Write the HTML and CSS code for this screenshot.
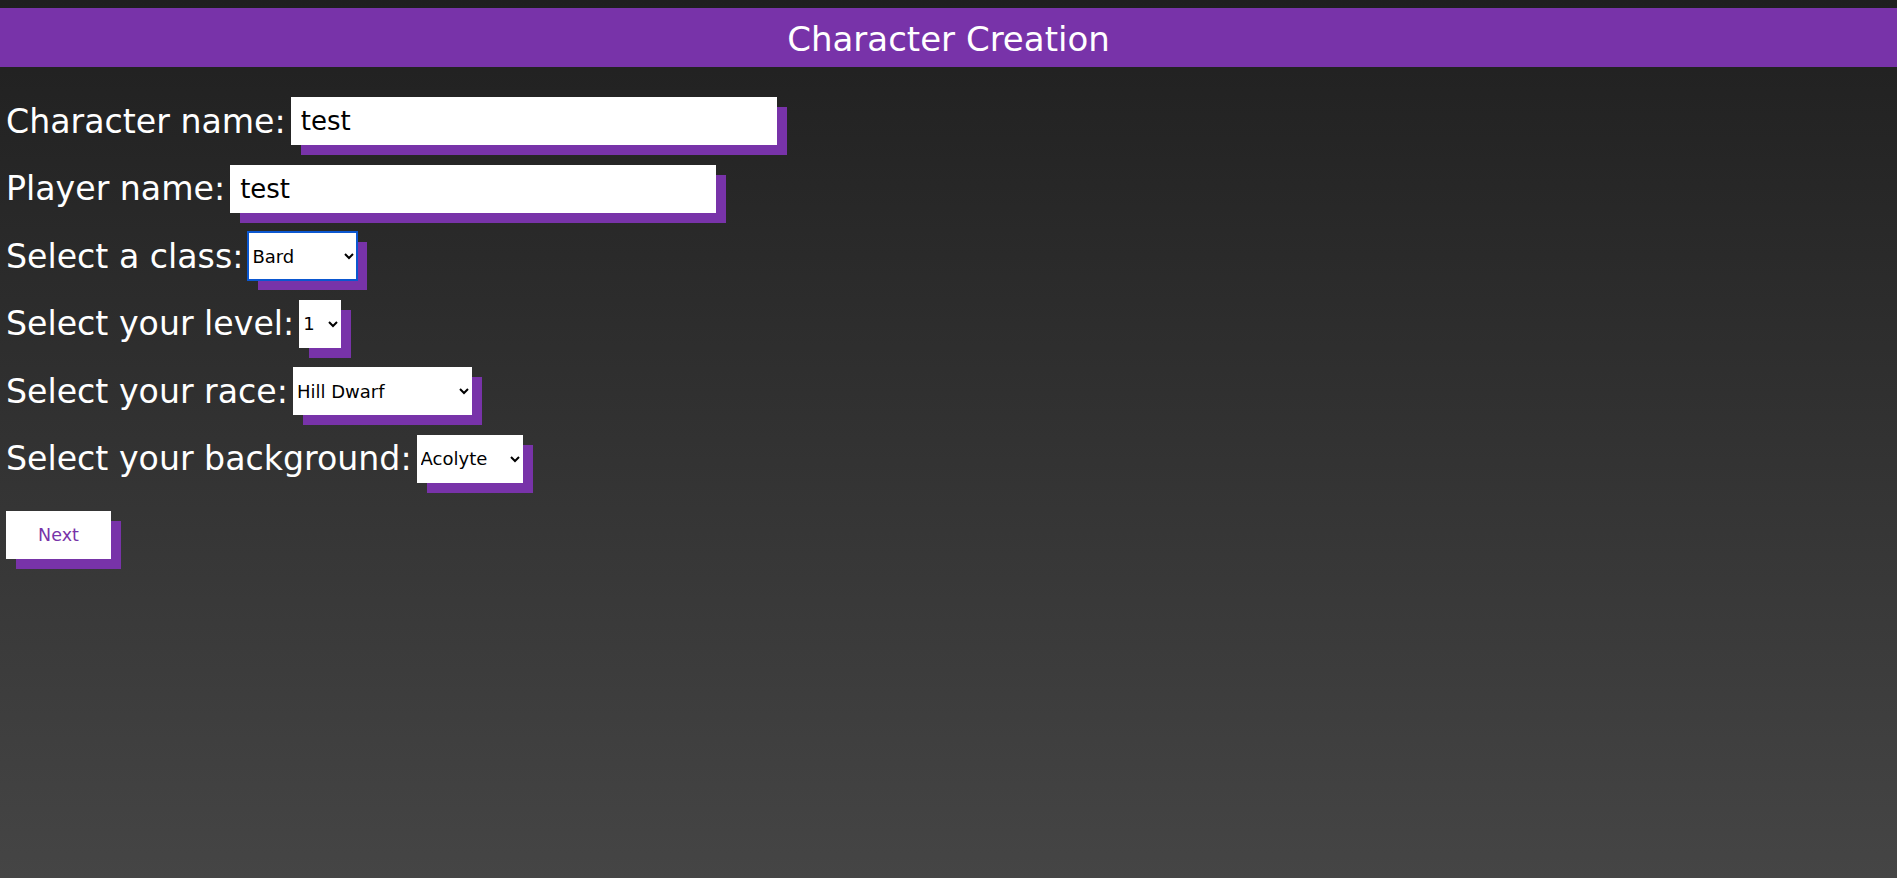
FILE: index.html
```html
<!DOCTYPE html>
<html lang="en">
<head>
<meta charset="utf-8">
<title>Character Creation</title>
<link rel="stylesheet" href="styles.css">
</head>
<body>
<header class="topbar"><h1 class="title">Character Creation</h1></header>
<main class="form">
  <div class="row">
    <label class="label" for="cname">Character name:</label>
    <input class="field text" id="cname" type="text" value="test">
  </div>
  <div class="row">
    <label class="label" for="pname">Player name:</label>
    <input class="field text" id="pname" type="text" value="test">
  </div>
  <div class="row">
    <label class="label" for="cls">Select a class:</label>
    <select class="field pick pick-class focused" id="cls">
      <option>Bard</option><option>Barbarian</option><option>Cleric</option>
    </select>
  </div>
  <div class="row">
    <label class="label" for="lvl">Select your level:</label>
    <select class="field pick pick-level" id="lvl">
      <option>1</option><option>2</option><option>3</option>
    </select>
  </div>
  <div class="row">
    <label class="label" for="race">Select your race:</label>
    <select class="field pick pick-race" id="race">
      <option>Hill Dwarf</option><option>Mountain Dwarf</option>
    </select>
  </div>
  <div class="row">
    <label class="label" for="bg">Select your background:</label>
    <select class="field pick pick-bg" id="bg">
      <option>Acolyte</option><option>Charlatan</option>
    </select>
  </div>
  <div class="actions">
    <button class="next" type="button">Next</button>
  </div>
</main>
</body>
</html>
```

FILE: styles.css
```css
html, body {
  margin: 0;
  padding: 0;
  height: 100%;
}
body {
  background: linear-gradient(to bottom, #1f1f1f 0%, #454545 100%);
  font-family: "DejaVu Sans", "Liberation Sans", sans-serif;
  color: #ffffff;
  padding-top: 8px;
  box-sizing: border-box;
}
.topbar {
  background: #7833a9;
  height: 59px;
  display: flex;
  align-items: center;
  justify-content: center;
}
.title {
  margin: 0;
  font-weight: normal;
  font-size: 34px;
  color: #ffffff;
  padding-top: 2px;
}
.form {
  padding: 30px 0 0 6px;
  display: flex;
  flex-direction: column;
  gap: 19.5px;
}
.row {
  display: flex;
  align-items: center;
  gap: 5px;
}
.label {
  font-size: 33.2px;
  color: #ffffff;
}
.field {
  box-sizing: border-box;
  height: 48px;
  border: none;
  background: #ffffff;
  color: #000000;
  box-shadow: 10px 10px 0 #7833a9;
  margin: 0;
  font-family: "DejaVu Sans", "Liberation Sans", sans-serif;
}
.text {
  width: 486px;
  padding: 0 10px;
  font-size: 26px;
}
.pick {
  font-size: 18px;
  padding: 0;
}
.pick-class { width: 109px; }
.pick-level { width: 42px; }
.pick-race { width: 179px; }
.pick-bg { width: 106px; }
.focused {
  outline: 2px solid #0b57d0;
  outline-offset: -1px;
}
.actions {
  padding-top: 9px;
}
.next {
  width: 105px;
  height: 48px;
  border: none;
  background: #ffffff;
  color: #7833a9;
  font-family: "DejaVu Sans", "Liberation Sans", sans-serif;
  font-size: 17.5px;
  box-shadow: 10px 10px 0 #7833a9;
  cursor: pointer;
}
```
